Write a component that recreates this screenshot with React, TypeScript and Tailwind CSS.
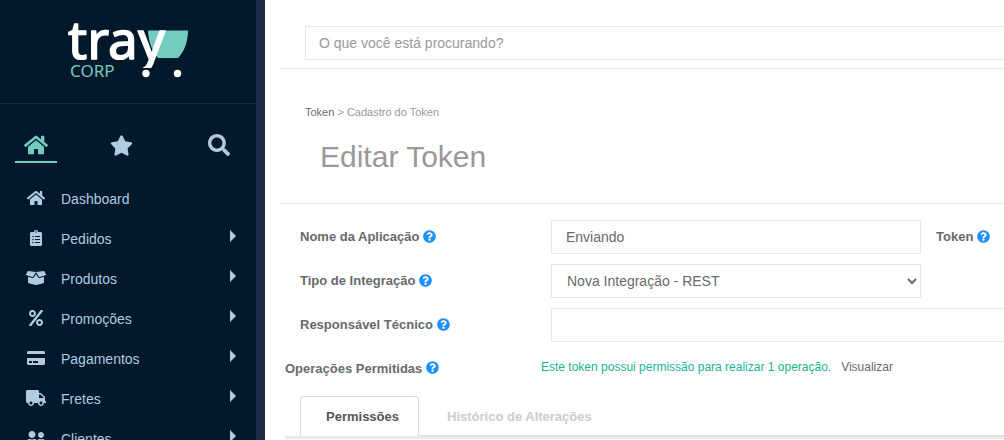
import React from "react";
import {
  FaHome,
  FaStar,
  FaSearch,
  FaClipboardList,
  FaBoxOpen,
  FaPercent,
  FaCreditCard,
  FaTruck,
  FaUserFriends,
  FaQuestionCircle,
} from "react-icons/fa";
import type { IconType } from "react-icons";

type MenuItem = { label: string; icon: IconType; size: number; expandable: boolean };

const menu: MenuItem[] = [
  { label: "Dashboard", icon: FaHome, size: 18, expandable: false },
  { label: "Pedidos", icon: FaClipboardList, size: 16, expandable: true },
  { label: "Produtos", icon: FaBoxOpen, size: 20, expandable: true },
  { label: "Promoções", icon: FaPercent, size: 16, expandable: true },
  { label: "Pagamentos", icon: FaCreditCard, size: 18, expandable: true },
  { label: "Fretes", icon: FaTruck, size: 20, expandable: true },
  { label: "Clientes", icon: FaUserFriends, size: 20, expandable: true },
];

function Logo() {
  return (
    <svg width="126" height="58" viewBox="65 22 126 58" role="img" aria-label="tray corp">
      <defs>
        <clipPath id="tail">
          <path d="M60 20H190V68H143L143 60H60Z" />
        </clipPath>
      </defs>
      <path d="M148 30.500H188C188 42 184 52 178 58H158C152 51 148.500 42 148 30.500Z" fill="#74cbc0" />
      <text
        x="68"
        y="59"
        fill="#fff"
        stroke="#fff"
        strokeWidth="1.500"
        strokeLinejoin="round"
        fontSize="53"
        clipPath="url(#tail)"
        className="font-['Noto_Sans',sans-serif] font-normal"
      >
        tra<tspan x="138">y</tspan>
      </text>
      <text x="70" y="77" fill="#74cbc0" fontSize="17" className="font-['Noto_Sans',sans-serif]">
        CORP
      </text>
      <circle cx="146" cy="73.500" r="3.700" fill="#fff" />
      <circle cx="177.500" cy="73.500" r="3.700" fill="#fff" />
    </svg>
  );
}

function Sidebar() {
  return (
    <aside className="w-[265px] shrink-0 overflow-hidden border-r-[9px] border-[#1f2d47] bg-[#02182b] text-[#aecbe0]">
      <div className="flex h-[104px] justify-center border-b border-[#1b2d45] pt-[22px]">
        <Logo />
      </div>
      <div className="flex justify-between pt-[26px] pr-4 pl-[15px]">
        <button aria-label="Início" className="flex h-[33px] w-[42px] items-center justify-center border-b-2 border-[#74cbc0] pb-px text-[#74cbc0]">
          <FaHome size={24} />
        </button>
        <button aria-label="Favoritos" className="mr-3 flex h-[33px] w-[42px] items-center justify-center pb-[3px]">
          <FaStar size={23} />
        </button>
        <button aria-label="Buscar" className="flex h-[33px] w-[42px] items-center justify-center pb-[3px]">
          <FaSearch size={22} />
        </button>
      </div>
      <nav className="pt-[15px]">
        <ul>
          {menu.map(({ label, icon: Icon, size, expandable }) => (
            <li key={label}>
              <a href="#" className="flex h-10 items-center pr-5 pl-[26px] text-sm">
                <span className="flex w-5 justify-center">
                  <Icon size={size} />
                </span>
                <span className="ml-[15px] flex-1 pt-0.5">{label}</span>
                {expandable && (
                  <svg width="6" height="12" viewBox="0 0 6 12" className="mb-1" aria-hidden="true">
                    <path d="M0 0L6 6L0 12Z" fill="currentColor" />
                  </svg>
                )}
              </a>
            </li>
          ))}
        </ul>
      </nav>
    </aside>
  );
}

function Label({ htmlFor, children }: { htmlFor?: string; children: React.ReactNode }) {
  return (
    <label htmlFor={htmlFor} className="flex items-center gap-1 text-[13px] font-bold whitespace-nowrap">
      {children}
      <FaQuestionCircle size={13} color="#1e90ff" className="mb-0.5" />
    </label>
  );
}

export default function App() {
  return (
    <div className="flex h-screen overflow-hidden bg-white font-['Liberation_Sans',Arial,sans-serif] text-[#676a6c]">
      <Sidebar />
      <main className="min-w-0 flex-1 pl-[15px]">
        <div className="border-b border-[#e7eaec] pt-[26px] pb-2 pl-[25px]">
          <input
            type="search"
            aria-label="Pesquisar"
            placeholder="O que você está procurando?"
            className="block h-[34px] w-full border border-r-0 border-[#e5e6e7] px-[13px] text-sm placeholder:text-[#999]"
          />
        </div>
        <header className="border-b border-[#e7eaec] pt-[35px] pb-[29px] pl-[25px]">
          <p className="text-[11px] leading-4 text-[#999]">
            <a href="#" className="text-[#676a6c]">Token</a> &gt; Cadastro do Token
          </p>
          <h1 className="mt-[19px] pl-[15px] text-[30px] leading-[35px] text-[#999]">Editar Token</h1>
        </header>
        <form className="pt-4">
          <div className="grid grid-cols-[236px_1fr_68px] items-center gap-x-[15px] gap-y-2.5 pl-5">
            <Label htmlFor="nome">Nome da Aplicação</Label>
            <input id="nome" defaultValue="Enviando" className="h-[34px] w-full border border-[#e5e6e7] px-3.5 text-sm" />
            <Label>Token</Label>
            <Label htmlFor="tipo">Tipo de Integração</Label>
            <select id="tipo" className="h-[34px] w-full border border-[#e5e6e7] bg-white pl-[11px] text-sm">
              <option>Nova Integração - REST</option>
            </select>
            <span />
            <Label htmlFor="resp">Responsável Técnico</Label>
            <input id="resp" className="col-span-2 h-[34px] w-full border border-r-0 border-[#e5e6e7] px-3.5 text-sm" />
          </div>
          <div className="grid grid-cols-[256px_1fr] items-start pt-4 pl-[5px]">
            <div className="pt-px">
              <Label>Operações Permitidas</Label>
            </div>
            <p className="flex gap-2.5 text-xs leading-[18px] whitespace-nowrap">
              <span className="text-[#1ab394]">Este token possui permissão para realizar 1 operação.</span>
              <a href="#">Visualizar</a>
            </p>
          </div>
        </form>
        <section className="mt-[17px] ml-[5px] border-b-[3px] border-[#e7eaec]">
          <div role="tablist" className="ml-[15px] flex border-b border-[#dddddd] text-[13px] font-bold">
            <button
              role="tab"
              aria-selected="true"
              className="-mb-px h-10 rounded-t border border-b-0 border-[#dddddd] bg-white pt-0.5 pr-[19px] pl-[25px] text-[#555555]"
            >
              Permissões
            </button>
            <button role="tab" aria-selected="false" className="px-7 pt-1 text-[#c9cbcf]">
              Histórico de Alterações
            </button>
          </div>
        </section>
      </main>
    </div>
  );
}
